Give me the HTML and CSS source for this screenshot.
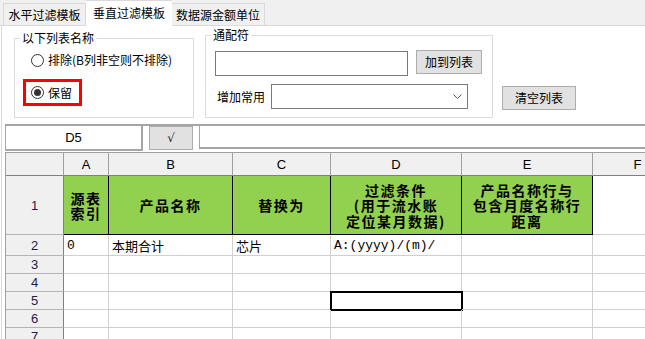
FILE: index.html
```html
<!DOCTYPE html>
<html lang="zh-CN">
<head>
    <meta charset="UTF-8">
    <title>过滤模板</title>
    <link rel="stylesheet" href="styles.css">
</head>
<body>
    <!-- Tabs -->
    <div class="tabs">
        <div class="tab">水平过滤模板</div>
        <div class="tab active">垂直过滤模板</div>
        <div class="tab wide">数据源金额单位</div>
    </div>

    <div class="panel">
        <!-- Options -->
        <div class="options">
            <div class="group list-group">
                <span class="group-title">以下列表名称</span>
                <label class="radio first"><span class="dot"></span>排除(B列非空则不排除)</label>
                <div class="keep-box">
                    <label class="radio"><span class="dot checked"></span>保留</label>
                </div>
            </div>

            <div class="group wild-group">
                <span class="group-title">通配符</span>
                <div class="wild-row">
                    <div class="text-input"></div>
                    <button class="btn add-btn">加到列表</button>
                </div>
                <div class="wild-row second">
                    <span class="field-label">增加常用</span>
                    <div class="combo">
                        <svg width="9" height="5" viewBox="0 0 9 5">
                            <polyline points="0.5 0.5 4.5 4.5 8.5 0.5" fill="none" stroke="#555" stroke-width="1"></polyline>
                        </svg>
                    </div>
                </div>
            </div>

            <button class="btn clear-btn">清空列表</button>
        </div>

        <!-- Formula bar -->
        <div class="formula-bar">
            <div class="name-box">D5</div>
            <button class="btn check-btn">√</button>
            <div class="formula-input"></div>
        </div>

        <!-- Sheet -->
        <div class="sheet">
            <div class="grid" id="grid"></div>
        </div>
    </div>

    <script>
        const cols = ['A', 'B', 'C', 'D', 'E', 'F'];
        const header = ['源表<br>索引', '产品名称', '替换为', '过滤条件<br>(用于流水账<br>定位某月数据)', '产品名称行与<br>包含月度名称行<br>距离'];
        const row2 = [
            { text: '0', cls: 'mono' },
            { text: '本期合计' },
            { text: '芯片' },
            { text: 'A:(yyyy)/(m)/', cls: 'mono' }
        ];

        let html = '<div class="cell corner"></div>';
        cols.forEach(c => { html += `<div class="cell col-head">${c}</div>`; });

        // Row 1: green titles
        html += '<div class="cell row-head">1</div>';
        cols.forEach((c, i) => {
            html += header[i]
                ? `<div class="cell title">${header[i]}</div>`
                : '<div class="cell"></div>';
        });

        // Rows 2-7
        for (let r = 2; r <= 7; r++) {
            html += `<div class="cell row-head">${r}</div>`;
            cols.forEach((c, i) => {
                let cls = 'cell data';
                let text = '';
                if (r === 2 && row2[i]) {
                    text = row2[i].text;
                    if (row2[i].cls) cls += ' ' + row2[i].cls;
                }
                if (r === 5 && c === 'D') cls += ' selected';
                html += `<div class="${cls}">${text}</div>`;
            });
        }

        document.getElementById('grid').innerHTML = html;
    </script>
</body>
</html>
```

FILE: styles.css
```css
* {
    margin: 0;
    padding: 0;
    box-sizing: border-box;
}

html, body {
    overflow: hidden;
}

body {
    font-family: "Noto Sans CJK SC", "Liberation Sans", sans-serif;
    font-size: 12px;
    color: #000;
    background: #fff;
}

/* Tabs */
.tabs {
    display: flex;
    align-items: flex-end;
    height: 26px;
    padding-left: 3px;
    background: #f0f0f0;
    border-bottom: 1px solid #d9d9d9;
}

.tab {
    width: 83px;
    height: 22px;
    border: 1px solid #d9d9d9;
    border-bottom: none;
    display: flex;
    align-items: center;
    justify-content: center;
    line-height: 14px;
    padding-top: 1px;
}

.tab.active {
    width: 86px;
    height: 26px;
    margin-bottom: -1px;
    background: #fff;
    border-left: none;
    border-right: none;
    padding-top: 0;
    padding-bottom: 2px;
}

.tab.wide {
    width: 93px;
    border-left: none;
}

/* Panel */
.panel {
    margin-left: 1px;
    border-left: 1px solid #d9d9d9;
}

.options {
    display: flex;
    align-items: flex-start;
    padding-left: 12px;
    height: 92px;
}

.group {
    border: 1px solid #dcdcdc;
}

.group-title {
    display: block;
    width: fit-content;
    height: 14px;
    line-height: 14px;
    margin: -8px 0 0 5px;
    padding: 0 2px;
    background: #fff;
}

.list-group {
    width: 180px;
    height: 80px;
    margin-top: 12px;
}

.radio {
    display: flex;
    align-items: center;
    gap: 4px;
    height: 16px;
    line-height: 16px;
}

.radio.first {
    margin: 7px 0 0 16px;
}

.dot {
    width: 13px;
    height: 13px;
    border: 1px solid #333;
    border-radius: 50%;
    background: #fff;
    display: flex;
    align-items: center;
    justify-content: center;
}

.dot.checked::after {
    content: "";
    width: 7px;
    height: 7px;
    border-radius: 50%;
    background: #333;
}

.keep-box {
    width: 59px;
    height: 27px;
    margin: 11px 0 0 8px;
    padding-left: 5px;
    border: 3px solid #ff0000;
    display: flex;
    align-items: center;
}

.wild-group {
    width: 288px;
    height: 83px;
    margin: 9px 0 0 11px;
}

.wild-row {
    display: flex;
    align-items: flex-start;
    margin-top: 8px;
    padding-left: 9px;
}

.wild-row.second {
    padding-left: 11px;
    align-items: center;
}

.text-input {
    width: 193px;
    height: 25px;
    margin-top: 1px;
    border: 1px solid #7a7a7a;
    background: #fff;
}

.btn {
    font-family: inherit;
    font-size: 12px;
    color: #000;
    background: #e1e1e1;
    border: 1px solid #adadad;
    height: 24px;
    line-height: 20px;
}

.add-btn {
    width: 66px;
    margin-left: 8px;
}

.field-label {
    width: 48px;
    line-height: 16px;
}

.combo {
    width: 197px;
    height: 25px;
    margin-left: 6px;
    border: 1px solid #7a7a7a;
    display: flex;
    align-items: center;
    justify-content: flex-end;
    padding-right: 5px;
}

.clear-btn {
    width: 74px;
    margin: 60px 0 0 9px;
}

/* Formula bar */
.formula-bar {
    display: flex;
    align-items: flex-start;
    height: 27px;
    margin: 6px 0 0 3px;
    border-top: 2px solid #a5a5a5;
}

.name-box {
    width: 138px;
    height: 25px;
    border-left: 1px solid #a5a5a5;
    border-right: 2px solid #a5a5a5;
    border-bottom: 2px solid #a5a5a5;
    display: flex;
    align-items: center;
    justify-content: center;
    font-family: "Liberation Sans", sans-serif;
    font-size: 13px;
}

.check-btn {
    width: 44px;
    margin-left: 6px;
    font-family: "DejaVu Sans", sans-serif;
    font-size: 12px;
    color: #222;
}

.formula-input {
    flex: 1;
    height: 23px;
    margin-left: 6px;
    border-left: 1px solid #a5a5a5;
    border-bottom: 2px solid #a5a5a5;
}

/* Sheet */
.sheet {
    margin: 1px 0 0 3px;
    border-top: 1px solid #a0a0a0;
    border-left: 1px solid #a0a0a0;
    overflow: hidden;
}

.grid {
    display: grid;
    grid-template-columns: 58px 45px 124px 98px 131px 131px 90px;
    grid-template-rows: 23px 59px 21px 18px 18px 18px 18px 18px;
    width: 677px;
}

.cell {
    border-right: 1px solid #d0d0d0;
    border-bottom: 1px solid #d0d0d0;
    display: flex;
    align-items: center;
}

.corner,
.col-head,
.row-head {
    background: #f0f0f0;
    justify-content: center;
    font-family: "Liberation Sans", sans-serif;
    font-size: 13px;
}

.corner,
.col-head {
    border-right-color: #a0a0a0;
    border-bottom-color: #808080;
}

.row-head {
    color: #1c1c48;
    border-right-color: #808080;
    border-bottom-color: #b4b4b4;
}

.title {
    background: #92d050;
    border-right-color: #000;
    border-bottom-color: #000;
    justify-content: center;
    text-align: center;
    font-weight: bold;
    font-size: 14px;
    letter-spacing: 1.5px;
    line-height: 15.5px;
    padding-top: 2px;
}

.data {
    padding-left: 3px;
    font-size: 13px;
}

.data.mono {
    font-family: "Liberation Mono", "Noto Sans CJK SC", monospace;
    font-size: 13px;
}

.selected {
    outline: 2px solid #000;
    outline-offset: -1px;
}
```
